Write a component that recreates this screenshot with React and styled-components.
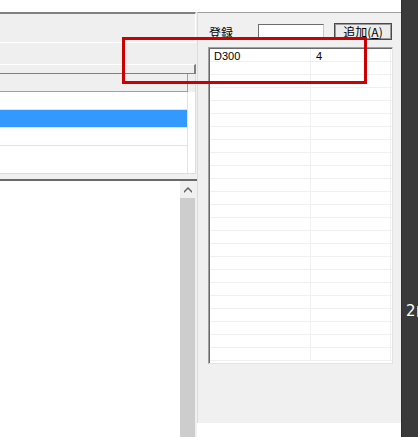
import styled, { createGlobalStyle } from "styled-components";

const GlobalStyle = createGlobalStyle`
	html, body {
		margin: 0;
		padding: 0;
		background: #ffffff;
		overflow: hidden;
	}
	* {
		box-sizing: border-box;
	}
`;

const Screen = styled.div`
	position: relative;
	display: flex;
	width: 418px;
	height: 437px;
	overflow: hidden;
	font-family: "Liberation Sans", "Noto Sans CJK JP", sans-serif;
	font-size: 11px;
	color: #000;
`;

const Main = styled.div`
	display: flex;
	flex-direction: column;
	width: 401px;
`;

const TopGap = styled.div`
	height: 12px;
	background: #ffffff;
`;

const Body = styled.div`
	display: flex;
	flex: 1;
`;

const LeftPane = styled.div`
	display: flex;
	flex-direction: column;
	width: 197px;
	background: #f0f0f0;
`;

const Toolbar = styled.div`
	height: 31px;
	width: 196px;
	background: #efefef;
	border-top: 2px solid #808080;
	border-bottom: 1px solid #ffffff;
	border-right: 1px solid #ffffff;
`;

const Strip = styled.div`
	height: 21px;
	width: 196px;
	background: #efefef;
`;

const Splitter = styled.div`
	height: 10px;
	width: 196px;
	background: #efefef;
	border-top: 1px solid #ffffff;
	border-bottom: 1px solid #808080;
	border-right: 2px solid #808080;
`;

const ListBox = styled.div`
	display: flex;
	flex-direction: column;
	width: 196px;
	height: 100px;
	background: #ffffff;
	border-right: 1px solid #dcdcdc;
	border-bottom: 1px solid #dcdcdc;
`;

const HeaderRow = styled.div`
	height: 18px;
	background: #efefef;
`;

const HeaderCell = styled.div`
	width: 188px;
	height: 18px;
	border-right: 1px solid #a0a0a0;
	border-bottom: 1px solid #a0a0a0;
`;

const ListRow = styled.div`
	width: 188px;
	height: 18px;
	background: ${p => (p.selected ? "#3399ff" : "#ffffff")};
	border-right: 1px solid #e3e3e3;
	border-bottom: 1px solid #e3e3e3;
`;

const ListGap = styled.div`
	flex: 1;
	width: 188px;
	border-right: 1px solid #e3e3e3;
`;

const LowerPane = styled.div`
	display: flex;
	flex: 1;
	margin-top: 5px;
	border-top: 2px solid #696969;
`;

const Canvas = styled.div`
	flex: 1;
	background: #ffffff;
`;

const ScrollBar = styled.div`
	display: flex;
	flex-direction: column;
	width: 15px;
	background: #cdcdcd;
`;

const ScrollButton = styled.div`
	display: flex;
	align-items: center;
	justify-content: center;
	height: 17px;
	background: #f0f0f0;
`;

const ScrollEdge = styled.div`
	width: 2px;
	background: #f0f0f0;
`;

const RightPane = styled.div`
	display: flex;
	flex-direction: column;
	width: 204px;
`;

const Panel = styled.div`
	display: flex;
	flex-direction: column;
	height: 411px;
	padding: 10px 9px 0 10px;
	background: #f0f0f0;
	border-top: 1px solid #a0a0a0;
	border-left: 1px solid #dcdcdc;
`;

const FormRow = styled.div`
	display: flex;
	align-items: center;
	height: 17px;
	padding-left: 1px;
`;

const Label = styled.span`
	width: 49px;
	font-family: "Noto Sans CJK JP", sans-serif;
	font-size: 12px;
	line-height: 14px;
	margin-top: 3px;
`;

const TextBox = styled.div`
	width: 66px;
	height: 15px;
	background: #ffffff;
	border: 1px solid #c8c8c8;
	border-top-color: #6d6d6d;
	border-left-color: #6d6d6d;
`;

const Button = styled.div`
	display: flex;
	align-items: center;
	justify-content: center;
	width: 58px;
	height: 17px;
	margin-left: 10px;
	background: #ececec;
	border: 1px solid #4a4a4a;
	box-shadow: inset 0 0 0 1px #9a9a9a;
	font-family: "Noto Sans CJK JP", sans-serif;
	font-size: 12px;
	line-height: 14px;

	u {
		text-decoration: underline;
		text-underline-offset: 1px;
	}
`;

const ListView = styled.div`
	display: flex;
	flex-direction: column;
	width: 185px;
	height: 317px;
	margin-top: 7px;
	background: #ffffff;
	border: 1px solid #e3e3e3;
	border-top-color: #a0a0a0;
	border-left-color: #a0a0a0;
	box-shadow: inset 1px 1px 0 #696969;
	padding: 1px 0 0 1px;
	overflow: hidden;
`;

const GridRow = styled.div`
	display: flex;
	height: 13px;
	flex-shrink: 0;
	border-bottom: 1px solid #f0f0f0;
`;

const GridCell = styled.div`
	width: ${p => p.width}px;
	padding-left: ${p => p.pad}px;
	padding-top: 1px;
	border-right: 1px solid #f0f0f0;
	font-size: 11px;
	line-height: 12px;
	white-space: nowrap;
`;

const BottomGap = styled.div`
	flex: 1;
	background: #ffffff;
`;

const DarkStrip = styled.div`
	display: flex;
	align-items: flex-start;
	width: 17px;
	padding: 302px 0 0 4px;
	background: #3a3a3a;
	border-left: 1px solid #2e2e2e;
	font-family: "DejaVu Sans", sans-serif;
	font-size: 15px;
	line-height: 18px;
	color: #ffffff;
`;

const CutGlyph = styled.i`
	display: block;
	width: 3px;
	height: 11px;
	margin: 4px 0 0 1px;
	background: #8fd4ff;
`;

const Highlight = styled.div`
	position: absolute;
	left: 122px;
	top: 37px;
	width: 245px;
	height: 47px;
	border: 3px solid #cc0000;
	pointer-events: none;
`;

const rows = [{ code: "D300", qty: "4" }, ...Array.from({ length: 23 }, () => ({ code: "", qty: "" }))];

const App = () => {
	return (
		<>
			<GlobalStyle />
			<Screen>
				<Main>
					<TopGap />
					<Body>
						<LeftPane>
							<Toolbar />
							<Strip />
							<Splitter />
							<ListBox>
								<HeaderRow>
									<HeaderCell />
								</HeaderRow>
								<ListRow />
								<ListRow selected />
								<ListRow />
								<ListGap />
							</ListBox>
							<LowerPane>
								<Canvas />
								<ScrollBar>
									<ScrollButton>
										<svg width="8" height="6" viewBox="0 0 8 6">
											<path d="M0 4 L4 0 L8 4 L8 6 L4 2 L0 6 Z" fill="#606060" />
										</svg>
									</ScrollButton>
								</ScrollBar>
								<ScrollEdge />
							</LowerPane>
						</LeftPane>
						<RightPane>
							<Panel>
								<FormRow>
									<Label>登録</Label>
									<TextBox />
									<Button>追加(<u>A</u>)</Button>
								</FormRow>
								<ListView>
									{rows.map((row, i) => (
										<GridRow key={i}>
											<GridCell width={101} pad={4}>{row.code}</GridCell>
											<GridCell width={80} pad={5}>{row.qty}</GridCell>
										</GridRow>
									))}
								</ListView>
							</Panel>
							<BottomGap />
						</RightPane>
					</Body>
				</Main>
				<DarkStrip>
					2<CutGlyph />
				</DarkStrip>
				<Highlight />
			</Screen>
		</>
	);
};

export default App;
